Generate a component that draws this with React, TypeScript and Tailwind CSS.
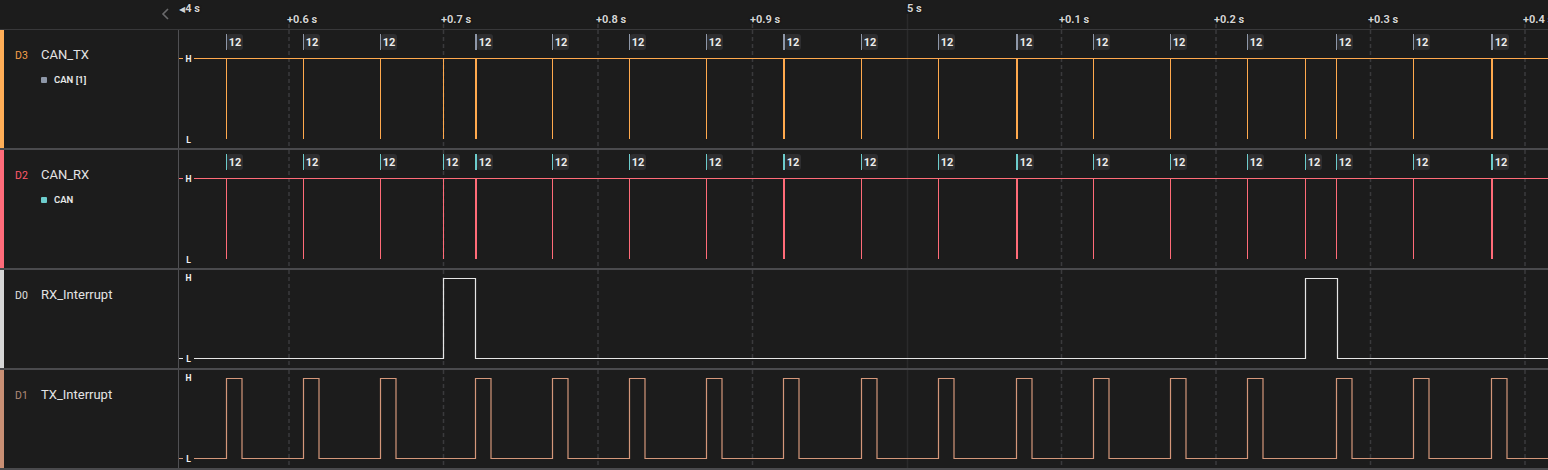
import React from 'react'

const GRID = [289, 443.5, 598, 752.5, 1061.5, 1216, 1370.5, 1525]
const MAJOR = 907.5

const SPIKES = [226, 303, 380, 443, 475, 552, 629, 706, 783, 861, 938, 1016, 1093, 1170, 1247, 1305, 1336, 1413, 1491]
const THICK = [475, 783, 1016, 1491]
const TX_UNLABELED = [443, 1305]
const TX_PULSES = [226, 303, 380, 475, 552, 629, 706, 783, 861, 938, 1016, 1093, 1170, 1247, 1336, 1413, 1491]

const TICKS = [
  { x: 289, label: '+0.6 s' },
  { x: 443, label: '+0.7 s' },
  { x: 598, label: '+0.8 s' },
  { x: 752, label: '+0.9 s' },
  { x: 1061, label: '+0.1 s' },
  { x: 1216, label: '+0.2 s' },
  { x: 1370, label: '+0.3 s' },
  { x: 1525, label: '+0.4 s' },
]

const LEFT = 179
const W = 1548 - LEFT

function Grid({ top, height }: { top: number; height: number }) {
  return (
    <g>
      {GRID.map((x) => (
        <line key={x} x1={x} x2={x} y1={top} y2={top + height} stroke="#3a3a3c" strokeWidth={1.5} strokeDasharray="4 3" />
      ))}
      <line x1={MAJOR} x2={MAJOR} y1={top} y2={top + height} stroke="#2a2a2b" strokeWidth={1.5} />
    </g>
  )
}

function LevelTag({ text, y }: { text: string; y: number }) {
  return (
    <g>
      <rect x={183} y={y - 5.5} width={11} height={11} fill="#1c1c1c" />
      <text x={188.5} y={y + 3.2} fill="#f2f2f2" fontSize={8.5} fontWeight={700} textAnchor="middle" fontFamily="Roboto, sans-serif">
        {text}
      </text>
    </g>
  )
}

function Badge({ x, y, bar, thick }: { x: number; y: number; bar: string; thick: boolean }) {
  return (
    <g>
      <rect x={x} y={y} width={thick ? 2 : 1} height={16} fill={bar} />
      <rect x={x + (thick ? 2 : 1)} y={y} width={16} height={16} rx={3} fill="#2e2e30" />
      <text x={x + (thick ? 10 : 9)} y={y + 12} fill="#ececec" fontSize={11} fontWeight={700} textAnchor="middle" fontFamily="Roboto, sans-serif">
        12
      </text>
    </g>
  )
}

function BusRow({ top, height, color, bar, labelAll }: { top: number; height: number; color: string; bar: string; labelAll: boolean }) {
  const hi = top + 28
  const lo = top + 109
  return (
    <svg width={W} height={height} viewBox={`${LEFT} ${top} ${W} ${height}`} className="block">
      <Grid top={top} height={height} />
      <line x1={LEFT} x2={1548} y1={hi + 0.5} y2={hi + 0.5} stroke={color} strokeWidth={1} />
      {SPIKES.map((x) => {
        const thick = THICK.includes(x)
        return <rect key={x} x={x} y={hi} width={thick ? 2 : 1} height={lo - hi} fill={color} />
      })}
      {SPIKES.filter((x) => labelAll || !TX_UNLABELED.includes(x)).map((x) => (
        <Badge key={x} x={x} y={top + 4} bar={bar} thick={THICK.includes(x)} />
      ))}
      <LevelTag text="H" y={hi + 0.5} />
      <LevelTag text="L" y={lo + 1} />
    </svg>
  )
}

function RxIrqRow() {
  const top = 270
  const hi = 278.5
  const lo = 358.5
  const d = `M${LEFT} ${lo} H443.5 V${hi} H475.5 V${lo} H1305.5 V${hi} H1337.5 V${lo} H1548`
  return (
    <svg width={W} height={98} viewBox={`${LEFT} ${top} ${W} 98`} className="block">
      <Grid top={top} height={98} />
      <path d={d} fill="none" stroke="#e6e6e6" strokeWidth={1.2} />
      <LevelTag text="H" y={278} />
      <LevelTag text="L" y={359} />
    </svg>
  )
}

function TxIrqRow() {
  const top = 370
  const hi = 378.5
  const lo = 458.5
  let d = `M${LEFT} ${lo}`
  TX_PULSES.forEach((x) => {
    d += ` H${x + 0.5} V${hi} H${x + 16} V${lo}`
  })
  d += ' H1548'
  return (
    <svg width={W} height={98} viewBox={`${LEFT} ${top} ${W} 98`} className="block">
      <Grid top={top} height={98} />
      <path d={d} fill="none" stroke="#d4977a" strokeWidth={1.2} />
      <LevelTag text="H" y={378} />
      <LevelTag text="L" y={459} />
    </svg>
  )
}

interface ChannelProps {
  readonly id: string
  readonly name: string
  readonly idColor: string
  readonly barColor: string
  readonly sub?: { label: string; dot: string }
  readonly height: string
  readonly children: React.ReactNode
}

function Channel({ id, name, idColor, barColor, sub, height, children }: ChannelProps) {
  return (
    <div className={`flex ${height} border-b-2 border-[#4a4a4d]`}>
      <div className="w-[179px] shrink-0 flex border-r border-[#505053]">
        <div className={`w-[4px] ${barColor}`} />
        <div className="flex-1 pt-[16px]">
          <div className="flex items-center h-[18px]">
            <span className={`w-[37px] pl-[11px] pt-[2px] text-[10.5px] ${idColor}`}>{id}</span>
            <span className="text-[13px] text-[#e4e4e4]">{name}</span>
          </div>
          {sub && (
            <div className="flex items-center gap-[7px] pl-[37px] mt-[9px]">
              <span className={`w-[6px] h-[6px] rounded-[1px] ${sub.dot}`} />
              <span className="text-[9.5px] font-semibold text-[#e8e8e8]">{sub.label}</span>
            </div>
          )}
        </div>
      </div>
      <div className="flex-1 overflow-hidden">{children}</div>
    </div>
  )
}

export default function App() {
  return (
    <div className="w-[1548px] h-[470px] bg-[#1c1c1c] flex flex-col overflow-hidden font-['Roboto',sans-serif]">
      <div className="flex h-[30px] border-b border-[#38383a] shrink-0">
        <div className="w-[179px] shrink-0 flex justify-end items-start pr-[8px] pt-[7px]">
          <svg width="10" height="14" viewBox="0 0 10 14">
            <polyline points="7,2 2,7 7,12" fill="none" stroke="#6a6a6c" strokeWidth="1.6" />
          </svg>
        </div>
        <div className="relative flex-1 overflow-hidden">
          <svg width={W} height={29} viewBox={`${LEFT} 0 ${W} 29`} className="absolute inset-0">
            {GRID.map((x) => (
              <line key={x} x1={x} x2={x} y1={24} y2={29} stroke="#3a3a3c" strokeWidth={1.5} strokeDasharray="4 3" />
            ))}
            <line x1={MAJOR} x2={MAJOR} y1={14} y2={29} stroke="#2a2a2b" strokeWidth={1.5} />
          </svg>
          <span className="absolute left-[0px] top-[1px] text-[11px] font-bold text-[#d4d4d4] [text-shadow:0_0_2px_#000]">
            <span className="text-[8px] font-['DejaVu_Sans']">◀</span>4 s
          </span>
          <span className="absolute left-[728px] top-[1px] text-[11px] font-bold text-[#d4d4d4] [text-shadow:0_0_2px_#000]">5 s</span>
          {TICKS.map((t) => (
            <span
              key={t.label}
              style={{ left: t.x - LEFT - 2 }}
              className="absolute top-[12px] text-[11px] font-bold text-[#d4d4d4] whitespace-nowrap [text-shadow:0_0_2px_#000]"
            >
              {t.label}
            </span>
          ))}
        </div>
      </div>

      <Channel
        id="D3"
        name="CAN_TX"
        idColor="text-[#f5a04a]"
        barColor="bg-[#ffae57]"
        sub={{ label: 'CAN [1]', dot: 'bg-[#8e97a8]' }}
        height="h-[120px]"
      >
        <BusRow top={30} height={118} color="#ffa94d" bar="#8e97a8" labelAll={false} />
      </Channel>

      <Channel
        id="D2"
        name="CAN_RX"
        idColor="text-[#ff5a6a]"
        barColor="bg-[#ff6b7a]"
        sub={{ label: 'CAN', dot: 'bg-[#6ccccc]' }}
        height="h-[120px]"
      >
        <BusRow top={150} height={118} color="#ff6b78" bar="#6ccccc" labelAll />
      </Channel>

      <Channel id="D0" name="RX_Interrupt" idColor="text-[#e0e0e0]" barColor="bg-[#d6d6d6]" height="h-[100px]">
        <RxIrqRow />
      </Channel>

      <Channel id="D1" name="TX_Interrupt" idColor="text-[#b08a78]" barColor="bg-[#c98f74]" height="h-[100px]">
        <TxIrqRow />
      </Channel>
    </div>
  )
}
